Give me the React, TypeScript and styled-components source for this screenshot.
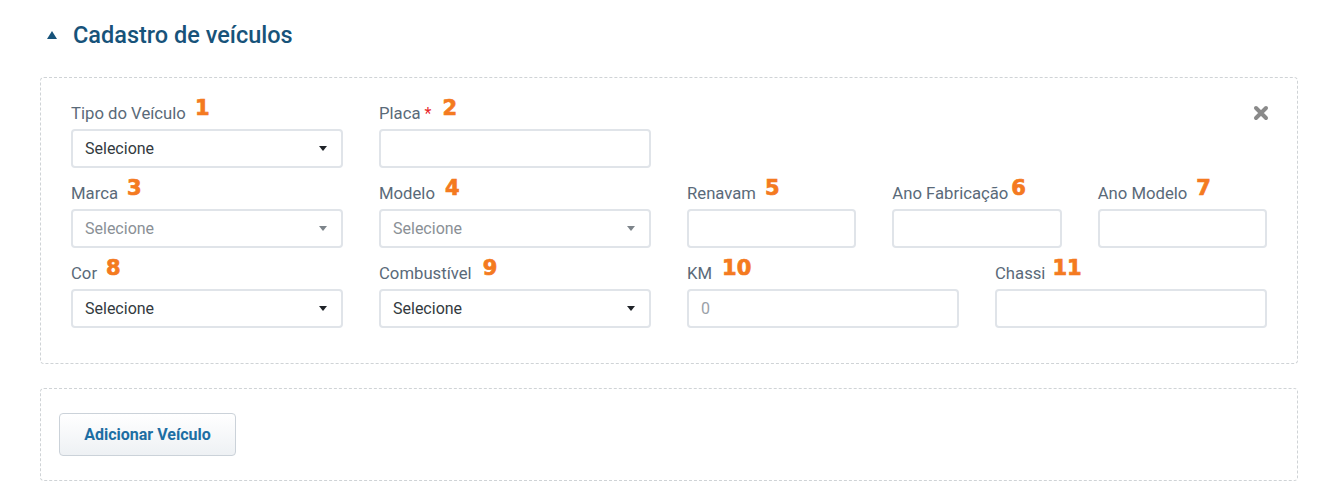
import styled, { createGlobalStyle } from "styled-components";

const GlobalStyle = createGlobalStyle`
  * { box-sizing: border-box; }
  body {
    margin: 0;
    background: #fff;
    font-family: Roboto, "Liberation Sans", sans-serif;
  }
`;

const Page = styled.div`
  padding: 20px 36px 0 40px;
`;

const Header = styled.div`
  display: flex;
  align-items: center;
  gap: 16px;
  height: 30px;
  padding-left: 7px;
  margin-bottom: 27px;
`;

const Title = styled.h2`
  margin: 0;
  font-size: 23.5px;
  font-weight: 500;
  color: #17537a;
`;

const Panel = styled.div<{ $compact?: boolean }>`
  position: relative;
  border: 1px dashed #cfd3d6;
  border-radius: 4px;
  padding: ${(p) => (p.$compact ? "24px 18px 24px 18px" : "20px 30px 35px 30px")};
  margin-bottom: 24px;
`;

const Grid = styled.div`
  display: grid;
  grid-template-columns: repeat(4, 1fr);
  column-gap: 36px;
  row-gap: 10px;
`;

const SubGrid = styled.div`
  grid-column: span 2;
  display: grid;
  grid-template-columns: repeat(3, 1fr);
  column-gap: 36px;
`;

const Field = styled.div<{ $start?: number }>`
  display: flex;
  flex-direction: column;
  ${(p) => (p.$start ? `grid-column-start: ${p.$start};` : "")}
`;

const LabelRow = styled.div`
  display: flex;
  align-items: flex-end;
  height: 26px;
  margin-bottom: 5px;
`;

const Label = styled.label`
  font-size: 16.7px;
  line-height: 20px;
  color: #5a6a79;
`;

const Required = styled.span`
  color: #e8262b;
  margin-left: 4px;
  font-size: 16px;
  line-height: 20px;
`;

const Num = styled.span<{ $gap: number }>`
  margin-left: ${(p) => p.$gap}px;
  margin-bottom: 5px;
  font-family: "DejaVu Sans", sans-serif;
  font-weight: 700;
  font-size: 21px;
  line-height: 21px;
  color: #f47a20;
  -webkit-text-stroke: 0.7px #f47a20;
`;

const Box = styled.div<{ $disabled?: boolean }>`
  height: 39px;
  border: 2px solid #e0e4e9;
  border-radius: 4px;
  background: #fff;
  display: flex;
  align-items: center;
  justify-content: space-between;
  padding: 0 14px 0 12px;
  font-size: 16px;
  color: ${(p) => (p.$disabled ? "#8a9096" : "#333a40")};
`;

const Placeholder = styled.span`
  color: #9aa1a8;
`;

const Caret = styled.span<{ $disabled?: boolean }>`
  width: 0;
  height: 0;
  border-left: 4px solid transparent;
  border-right: 4px solid transparent;
  border-top: 5px solid ${(p) => (p.$disabled ? "#7d848a" : "#1f2328")};
`;

const CloseBtn = styled.button`
  position: absolute;
  top: 27px;
  right: 28px;
  width: 16px;
  height: 16px;
  padding: 0;
  border: 0;
  background: none;
  cursor: pointer;
  display: flex;
`;

const AddButton = styled.button`
  height: 43px;
  width: 177px;
  border: 1px solid #cbd2d9;
  border-radius: 4px;
  background: linear-gradient(#ffffff, #eef1f4);
  font-family: Roboto, "Liberation Sans", sans-serif;
  font-size: 16px;
  font-weight: 700;
  color: #1d6ea3;
  cursor: pointer;
`;

type FieldDef = {
  label: string;
  num: string;
  gap?: number;
  kind: "select" | "input";
  disabled?: boolean;
  placeholder?: string;
  required?: boolean;
  start?: number;
};

function FormField({ f }: { f: FieldDef }) {
  return (
    <Field $start={f.start}>
      <LabelRow>
        <Label>{f.label}</Label>
        {f.required && <Required>*</Required>}
        <Num $gap={f.gap ?? 9}>{f.num}</Num>
      </LabelRow>
      {f.kind === "select" ? (
        <Box $disabled={f.disabled}>
          <span>Selecione</span>
          <Caret $disabled={f.disabled} />
        </Box>
      ) : (
        <Box>{f.placeholder && <Placeholder>{f.placeholder}</Placeholder>}</Box>
      )}
    </Field>
  );
}

const row1: FieldDef[] = [
  { label: "Tipo do Veículo", num: "1", kind: "select" },
  { label: "Placa", num: "2", kind: "input", required: true, gap: 11 },
];

const row2left: FieldDef[] = [
  { label: "Marca", num: "3", kind: "select", disabled: true, start: 1 },
  { label: "Modelo", num: "4", kind: "select", disabled: true, gap: 10 },
];

const row2right: FieldDef[] = [
  { label: "Renavam", num: "5", kind: "input" },
  { label: "Ano Fabricação", num: "6", kind: "input", gap: 3 },
  { label: "Ano Modelo", num: "7", kind: "input" },
];

const row3: FieldDef[] = [
  { label: "Cor", num: "8", kind: "select" },
  { label: "Combustível", num: "9", kind: "select", gap: 11 },
  { label: "KM", num: "10", kind: "input", placeholder: "0", gap: 10 },
  { label: "Chassi", num: "11", kind: "input", gap: 7 },
];

export default function App() {
  return (
    <Page>
      <GlobalStyle />
      <Header>
        <svg width="10" height="8" viewBox="0 0 10 8">
          <path d="M5 0 L10 8 L0 8 Z" fill="#17537a" />
        </svg>
        <Title>Cadastro de veículos</Title>
      </Header>

      <Panel>
        <CloseBtn aria-label="Remover">
          <svg width="16" height="16" viewBox="0 0 16 16">
            <path
              d="M3 3 L13 13 M13 3 L3 13"
              stroke="#8a8a8a"
              strokeWidth="4"
              strokeLinecap="round"
            />
          </svg>
        </CloseBtn>
        <Grid>
          {row1.map((f) => (
            <FormField key={f.label} f={f} />
          ))}
          {row2left.map((f) => (
            <FormField key={f.label} f={f} />
          ))}
          <SubGrid>
            {row2right.map((f) => (
              <FormField key={f.label} f={f} />
            ))}
          </SubGrid>
          {row3.map((f) => (
            <FormField key={f.label} f={f} />
          ))}
        </Grid>
      </Panel>

      <Panel $compact>
        <AddButton>Adicionar Veículo</AddButton>
      </Panel>
    </Page>
  );
}
